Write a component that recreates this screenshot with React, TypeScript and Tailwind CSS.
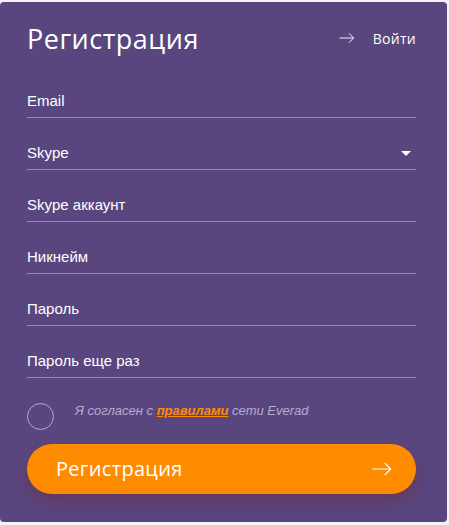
import React from 'react';

const fields = ['Email', 'Skype', 'Skype аккаунт', 'Никнейм', 'Пароль', 'Пароль еще раз'];

const ArrowRight: React.FC<{ className?: string }> = ({ className }) => (
  <svg viewBox="0 0 24 16" fill="none" stroke="currentColor" strokeWidth="1.4" className={className}>
    <path d="M1 8h21M15 1l7 7-7 7" />
  </svg>
);

export default function App() {
  return (
    <div className="min-h-[525px] w-[449px] bg-[#f3f2f7] pt-[2px]">
      <div
        className="w-[447px] h-[520px] rounded-[4px] bg-[#59467e] pl-[27px] pr-[31px] pt-[19px] text-white"
        style={{ fontFamily: '"Open Sans", "Liberation Sans", sans-serif' }}
      >
        <div className="flex h-[34px] items-center justify-between">
          <h1 className="text-[27px] font-normal leading-none tracking-[0.5px]">Регистрация</h1>
          <a className="flex items-center gap-[18px] text-[14px]">
            <ArrowRight className="h-[12px] w-[16px]" />
            <span className="font-medium tracking-[0.3px]">Войти</span>
          </a>
        </div>

        <div className="mt-[31px] flex flex-col gap-[20px]">
          {fields.map((f) => (
            <div
              key={f}
              className="flex h-[32px] items-center justify-between border-b border-[#9789b6] pb-[0px] text-[15px]"
              style={{ fontFamily: '"Liberation Sans", Arial, sans-serif' }}
            >
              <span>{f}</span>
              {f === 'Skype' && (
                <span className="mr-[5px] h-0 w-0 border-x-[5px] border-t-[5px] border-x-transparent border-t-white" />
              )}
            </div>
          ))}
        </div>

        <div className="mt-[25px] flex items-start gap-[21px]">
          <span className="h-[27px] w-[27px] shrink-0 rounded-full border border-[#b6abcf]" />
          <p
            className="-mt-[2px] text-[13px] italic text-[#b5abcf]"
            style={{ fontFamily: '"Liberation Sans", Arial, sans-serif' }}
          >
            Я согласен с{' '}
            <a className="font-bold text-[#ff8c00] underline">правилами</a> сети Everad
          </p>
        </div>

        <button className="mt-[14px] flex h-[50px] w-full items-center justify-between rounded-full bg-[#ff8c00] pl-[29px] pr-[22px] text-[20px] text-white shadow-[0_8px_14px_rgba(120,40,40,0.35)]">
          <span className="tracking-[0.3px]">Регистрация</span>
          <ArrowRight className="h-[14px] w-[24px]" />
        </button>
      </div>
    </div>
  );
}
